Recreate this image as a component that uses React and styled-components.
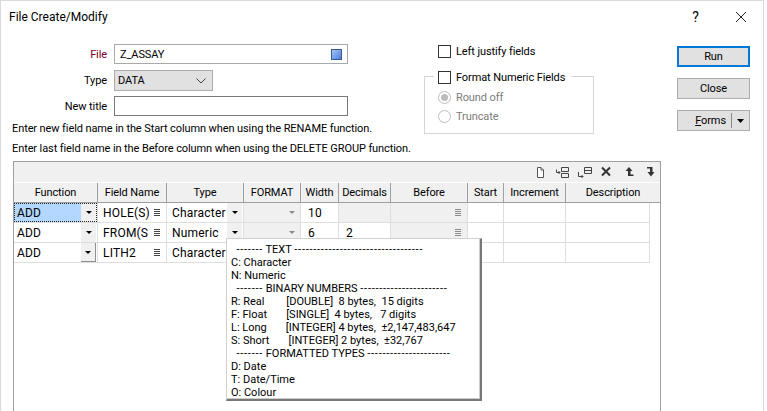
import React from 'react';
import styled, {createGlobalStyle} from 'styled-components';

const Global = createGlobalStyle`
  html, body {
    margin: 0;
    padding: 0;
    background: #fff;
    overflow: hidden;
  }
  body {
    font-family: Roboto, "Open Sans", sans-serif;
    font-size: 11px;
    letter-spacing: -0.1px;
    color: #000;
  }
`;

const COLS = '84px 69px 77px 57px 38px 52px 77px 36px 62px 84px';

const Window = styled.div`
  position: relative;
  box-sizing: border-box;
  width: 764px;
  height: 411px;
  background: #fff;
  border: 1px solid #dadada;
  border-bottom: 0;
  overflow: hidden;
`;

const TitleBar = styled.div`
  display: flex;
  align-items: center;
  height: 31px;
  padding-left: 8px;
`;

const TitleText = styled.div`
  flex: 1;
  font-size: 12px;
  letter-spacing: 0;
`;

const TitleButton = styled.div`
  display: flex;
  align-items: center;
  justify-content: center;
  width: 45px;
  height: 30px;
  font-size: 14px;
`;

const Top = styled.div`
  display: flex;
  height: 129px;
`;

const LeftCol = styled.div`
  width: 423px;
  padding-top: 12px;
`;

const FieldRow = styled.div`
  display: flex;
  align-items: center;
  height: ${({h}) => h}px;
  margin-bottom: ${({gap}) => gap}px;
`;

const FieldLabel = styled.div`
  width: 106px;
  margin-right: 7px;
  text-align: right;
  color: ${({required}) => required ? '#7a0026' : '#000'};
`;

const TextBox = styled.div`
  box-sizing: border-box;
  display: flex;
  align-items: center;
  justify-content: space-between;
  width: 234px;
  height: ${({h}) => h}px;
  padding: 0 5px 0 5px;
  border: 1px solid ${({dark}) => dark ? '#7a7a7a' : '#a9a9a9'};
`;

const FileSwatch = styled.div`
  box-sizing: border-box;
  width: 11px;
  height: 11px;
  border: 1px solid #3a5a8c;
  background: linear-gradient(135deg, #a5c4f5, #4f7fe0);
`;

const SelectBox = styled.div`
  box-sizing: border-box;
  display: flex;
  align-items: center;
  justify-content: space-between;
  width: 99px;
  height: 21px;
  padding: 0 6px 0 3px;
  background: #e1e1e1;
  border: 1px solid #adadad;
`;

const Note = styled.div`
  margin-left: 11px;
  height: 20px;
  line-height: 20px;
  white-space: nowrap;
`;

const Notes = styled.div`
  margin-top: 3px;
`;

const MiddleCol = styled.div`
  position: relative;
  width: 253px;
  padding-top: 12px;
`;

const CheckRow = styled.div`
  display: flex;
  align-items: center;
  gap: 5px;
  height: 14px;
  padding-left: ${({indent}) => indent}px;
`;

const CheckBox = styled.div`
  box-sizing: border-box;
  width: 13px;
  height: 13px;
  background: #fff;
  border: 1px solid #333;
`;

const GroupBox = styled.div`
  box-sizing: border-box;
  width: 170px;
  height: 58px;
  margin-top: 18px;
  padding-top: 11px;
  border: 1px solid #d5d5d5;
`;

const GroupTitle = styled.div`
  position: absolute;
  left: 10px;
  top: 38px;
  display: flex;
  align-items: center;
  gap: 5px;
  padding: 0 6px 0 4px;
  height: 14px;
  background: #fff;
`;

const RadioRow = styled.div`
  display: flex;
  align-items: center;
  gap: 5px;
  height: 19px;
  padding-left: 13px;
  color: #7b7b7b;
`;

const Radio = styled.div`
  box-sizing: border-box;
  display: flex;
  align-items: center;
  justify-content: center;
  width: 13px;
  height: 13px;
  border-radius: 50%;
  border: 1px solid #bcbcbc;
  &::after {
    content: '';
    display: ${({on}) => on ? 'block' : 'none'};
    width: 7px;
    height: 7px;
    border-radius: 50%;
    background: #bcbcbc;
  }
`;

const ButtonCol = styled.div`
  display: flex;
  flex-direction: column;
  gap: 11px;
  padding-top: 14px;
`;

const Button = styled.div`
  box-sizing: border-box;
  display: flex;
  align-items: center;
  justify-content: center;
  width: 73px;
  height: 21px;
  background: #e1e1e1;
  border: ${({primary}) => primary ? '2px solid #0078d7' : '1px solid #adadad'};
`;

const FormsLabel = styled.div`
  flex: 1;
  padding-right: 5px;
  text-align: right;
`;

const FormsArrow = styled.div`
  display: flex;
  align-items: center;
  justify-content: center;
  width: 17px;
  height: 15px;
  border-left: 1px solid #8a8a8a;
`;

const Table = styled.div`
  box-sizing: border-box;
  width: 648px;
  height: 251px;
  margin-left: 12px;
  border: 1px solid #a0a0a0;
  border-bottom: 0;
`;

const Toolbar = styled.div`
  display: flex;
  align-items: center;
  justify-content: flex-end;
  gap: 6px;
  height: 20px;
  padding-right: 1px;
  background: #f0f0f0;
  border-bottom: 1px solid #fff;
`;

const ToolIcon = styled.svg`
  display: block;
  width: 16px;
  height: 16px;
`;

const HeaderRow = styled.div`
  display: grid;
  grid-template-columns: ${COLS} 1fr;
  height: 19px;
  background: #f0f0f0;
  border-bottom: 1px solid #a0a0a0;
`;

const HeaderCell = styled.div`
  display: flex;
  align-items: center;
  justify-content: center;
  box-sizing: border-box;
  border-right: ${({last}) => last ? 0 : '1px solid #a0a0a0'};
  grid-column: ${({last}) => last ? 'span 2' : 'auto'};
  overflow: hidden;
  white-space: nowrap;
`;

const Row = styled.div`
  display: grid;
  grid-template-columns: ${COLS};
  height: 20px;
`;

const Cell = styled.div`
  position: relative;
  box-sizing: border-box;
  display: flex;
  align-items: center;
  padding-left: ${({pad}) => pad ?? 5}px;
  background: ${({off}) => off ? '#f0f0f0' : '#fff'};
  border-right: 1px solid #dedede;
  border-bottom: 1px solid #dedede;
  font-size: 12px;
  letter-spacing: 0.2px;
  white-space: nowrap;
  overflow: hidden;
`;

const Selected = styled.div`
  align-self: stretch;
  display: flex;
  align-items: center;
  width: 67px;
  padding-left: 3px;
  box-sizing: border-box;
  background: #b3d7ff;
`;

const Focus = styled.div`
  position: absolute;
  inset: 0;
  border: 1px dotted #222;
`;

const DropButton = styled.div`
  position: absolute;
  right: 1px;
  top: 0;
  bottom: 0;
  width: 15px;
  display: flex;
  align-items: center;
  justify-content: center;
  background: #f0f0f0;
  box-sizing: border-box;
  border-right: ${({raised}) => raised ? '1px solid #8f8f8f' : '0'};
  border-bottom: ${({raised}) => raised ? '1px solid #8f8f8f' : '0'};
  &::after {
    content: '';
    border-left: 3px solid transparent;
    border-right: 3px solid transparent;
    border-top: 3px solid ${({off}) => off ? '#8a8a8a' : '#000'};
  }
`;

const Menu = styled.svg`
  position: absolute;
  right: 6px;
  top: 5px;
  width: 6px;
  height: 9px;
  stroke: ${({off}) => off ? '#8a8a8a' : '#444'};
`;

const Tooltip = styled.div`
  position: absolute;
  left: 225px;
  top: 237px;
  box-sizing: border-box;
  width: 256px;
  height: 163px;
  padding: 4px 0 0 4px;
  background: #fff;
  border: 1px solid #d0d0d0;
  border-right: 2px solid #777;
  border-bottom: 2px solid #777;
  box-shadow: inset -1px -1px 0 #ccc;
  letter-spacing: 0;
`;

const TipLine = styled.div`
  height: 13px;
  line-height: 13px;
  white-space: pre;
`;

const Dashes = styled.span`
  letter-spacing: 0.75px;
`;

const MenuIcon = ({off}) => (
    <Menu off={off} viewBox="0 0 6 9">
        <path d="M0 1.5H6M0 3.5H6M0 5.5H6M0 7.5H6" fill="none"/>
    </Menu>
);

const Arrow = () => (
    <svg width="7" height="4" viewBox="0 0 7 4"><path d="M0 0H7L3.5 4Z" fill="#000"/></svg>
);

const TipHeading = ({title, tail}) => (
    <TipLine>{'  '}<Dashes>-------</Dashes> {title} <Dashes>{'-'.repeat(tail)}</Dashes></TipLine>
);

const headers = ['Function', 'Field Name', 'Type', 'FORMAT', 'Width', 'Decimals', 'Before', 'Start', 'Increment', 'Description'];

const FunctionCell = ({selected, raised}) => (
    <Cell pad={selected ? 0 : 3}>
        {selected ? <Selected>ADD</Selected> : 'ADD'}
        <DropButton raised={raised}/>
        {selected && <Focus/>}
    </Cell>
);

const Empty = () => <><Cell/><Cell/><Cell/></>;

const App = () => (
    <>
        <Global/>
        <Window>
            <TitleBar>
                <TitleText>File Create/Modify</TitleText>
                <TitleButton>?</TitleButton>
                <TitleButton>
                    <svg width="10" height="10" viewBox="0 0 10 10">
                        <path d="M0 0L10 10M10 0L0 10" stroke="#222" fill="none"/>
                    </svg>
                </TitleButton>
            </TitleBar>
            <Top>
                <LeftCol>
                    <FieldRow h={20} gap={6}>
                        <FieldLabel required>File</FieldLabel>
                        <TextBox h={20}>Z_ASSAY<FileSwatch/></TextBox>
                    </FieldRow>
                    <FieldRow h={21} gap={5}>
                        <FieldLabel>Type</FieldLabel>
                        <SelectBox>
                            DATA
                            <svg width="10" height="6" viewBox="0 0 10 6">
                                <path d="M0.5 0.5L5 5L9.5 0.5" stroke="#444" fill="none"/>
                            </svg>
                        </SelectBox>
                    </FieldRow>
                    <FieldRow h={20} gap={0}>
                        <FieldLabel>New title</FieldLabel>
                        <TextBox h={20} dark/>
                    </FieldRow>
                    <Notes>
                        <Note>Enter new field name in the Start column when using the RENAME function.</Note>
                        <Note>Enter last field name in the Before column when using the DELETE GROUP function.</Note>
                    </Notes>
                </LeftCol>
                <MiddleCol>
                    <CheckRow indent={14}><CheckBox/>Left justify fields</CheckRow>
                    <GroupBox>
                        <RadioRow><Radio on/>Round off</RadioRow>
                        <RadioRow><Radio/>Truncate</RadioRow>
                    </GroupBox>
                    <GroupTitle><CheckBox/>Format Numeric Fields</GroupTitle>
                </MiddleCol>
                <ButtonCol>
                    <Button primary>Run</Button>
                    <Button>Close</Button>
                    <Button>
                        <FormsLabel><u>F</u>orms</FormsLabel>
                        <FormsArrow><Arrow/></FormsArrow>
                    </Button>
                </ButtonCol>
            </Top>
            <Table>
                <Toolbar>
                    <ToolIcon viewBox="0 0 16 16">
                        <path d="M4.5 3.5H8L10.5 6V13.5H4.5Z" fill="#fff" stroke="#555"/>
                        <path d="M8 3.5V6H10.5" fill="#ddd" stroke="#555"/>
                    </ToolIcon>
                    <ToolIcon viewBox="0 0 16 16">
                        <path d="M6.5 3.5H13.5V7.5H6.5ZM6.5 9.5H13.5V13.5H6.5Z" fill="none" stroke="#444"/>
                        <path d="M1.5 5.5V8.5H5M3.5 7L5 8.5L3.5 10" fill="none" stroke="#444"/>
                    </ToolIcon>
                    <ToolIcon viewBox="0 0 16 16">
                        <path d="M7.5 3.5H14.5V9.5H7.5ZM7.5 6.5H14.5" fill="none" stroke="#444"/>
                        <path d="M1.5 8V12.5H6M4.5 11L6 12.5L4.5 14" fill="none" stroke="#444"/>
                    </ToolIcon>
                    <ToolIcon viewBox="0 0 16 16">
                        <path d="M3 3.5L11 11.5M11 3.5L3 11.5" fill="none" stroke="#333" strokeWidth="2"/>
                    </ToolIcon>
                    <ToolIcon viewBox="0 0 16 16">
                        <path d="M8 3L11.5 7H9.5V10.5H12.5V12H7V7H4.5Z" fill="#333"/>
                    </ToolIcon>
                    <ToolIcon viewBox="0 0 16 16">
                        <path d="M4 3H9.5V8H11.5L8 12.5L4.5 8H7V4.5H4Z" fill="#333"/>
                    </ToolIcon>
                </Toolbar>
                <HeaderRow>
                    {headers.map((h, i) => <HeaderCell key={h} last={i === headers.length - 1}>{h}</HeaderCell>)}
                </HeaderRow>
                <Row>
                    <FunctionCell selected/>
                    <Cell>HOLE(S)<MenuIcon/></Cell>
                    <Cell>Character<DropButton/></Cell>
                    <Cell off><DropButton off/></Cell>
                    <Cell pad={7}>10</Cell>
                    <Cell off/>
                    <Cell off><MenuIcon off/></Cell>
                    <Empty/>
                </Row>
                <Row>
                    <FunctionCell/>
                    <Cell>FROM(S<MenuIcon/></Cell>
                    <Cell>Numeric<DropButton/></Cell>
                    <Cell off><DropButton off/></Cell>
                    <Cell pad={7}>6</Cell>
                    <Cell pad={7}>2</Cell>
                    <Cell off><MenuIcon off/></Cell>
                    <Empty/>
                </Row>
                <Row>
                    <FunctionCell raised/>
                    <Cell>LITH2<MenuIcon/></Cell>
                    <Cell>Character<DropButton/></Cell>
                    <Cell/>
                    <Cell/>
                    <Cell/>
                    <Cell/>
                    <Empty/>
                </Row>
            </Table>
            <Tooltip>
                <TipHeading title="TEXT" tail={34}/>
                <TipLine>C: Character</TipLine>
                <TipLine>N: Numeric</TipLine>
                <TipHeading title="BINARY NUMBERS" tail={23}/>
                <TipLine>{'R: Real        [DOUBLE]  8 bytes,  15 digits'}</TipLine>
                <TipLine>{'F: Float       [SINGLE]  4 bytes,   7 digits'}</TipLine>
                <TipLine>{'L: Long       [INTEGER] 4 bytes,  ±2,147,483,647'}</TipLine>
                <TipLine>{'S: Short       [INTEGER] 2 bytes,  ±32,767'}</TipLine>
                <TipHeading title="FORMATTED TYPES" tail={22}/>
                <TipLine>D: Date</TipLine>
                <TipLine>T: Date/Time</TipLine>
                <TipLine>O: Colour</TipLine>
            </Tooltip>
        </Window>
    </>
);

export default App;
